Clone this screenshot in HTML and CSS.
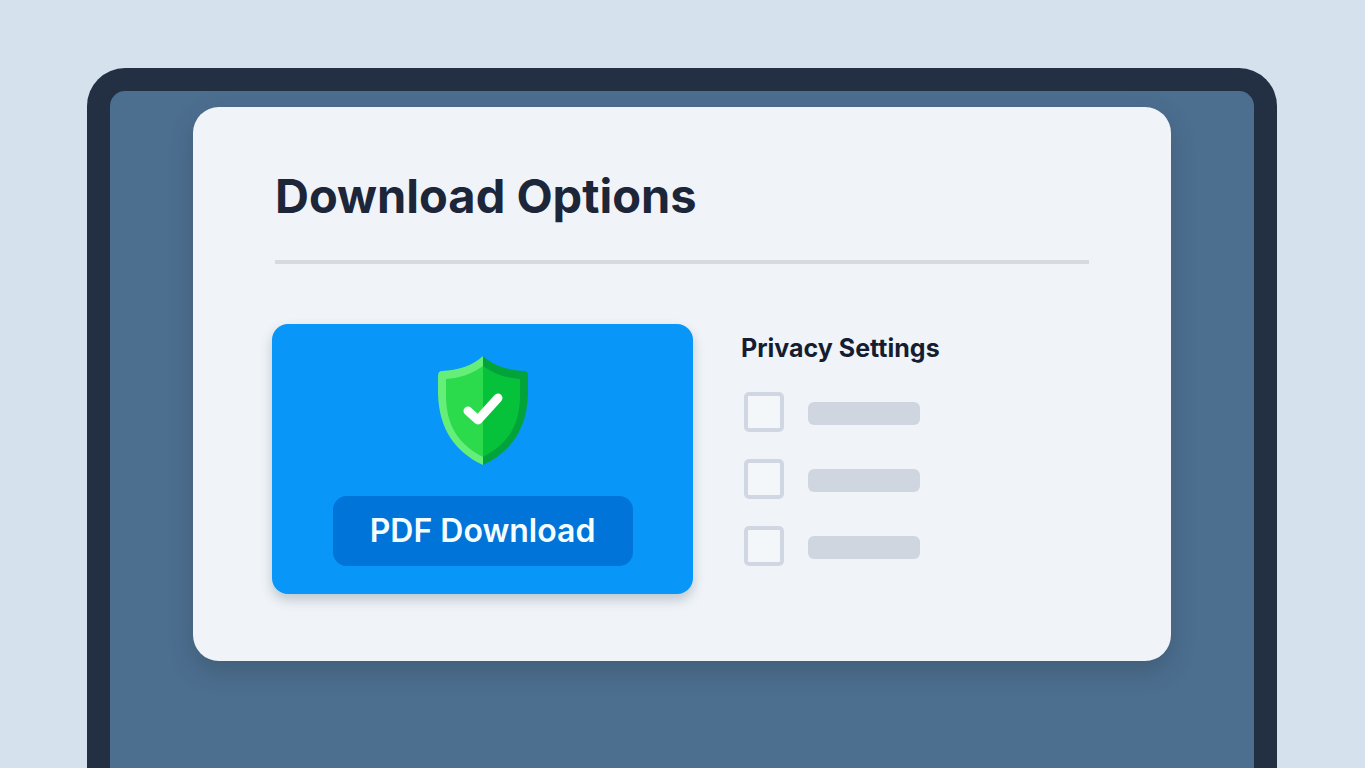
FILE: index.html
```html
<!DOCTYPE html>
<html lang="en">
<head>
<meta charset="utf-8">
<meta name="viewport" content="width=device-width, initial-scale=1">
<title>Download Options</title>
<link rel="stylesheet" href="styles.css">
</head>
<body>
<div class="device">
  <main class="card">
    <header class="card-header">
      <h1 class="title">Download Options</h1>
    </header>
    <div class="content">
      <section class="download">
        <svg class="shield" viewBox="0 0 90 110" aria-hidden="true">
          <path fill="#65ef78" d="M45 0C34 10 20 14 4 15Q0 15 0 20V38C1 73 17 96 45 109Z"/>
          <path fill="#03a33c" d="M45 0C56 10 70 14 86 15Q90 15 90 20V38C89 73 73 96 45 109Z"/>
          <path fill="#2bdb4c" d="M45 10C34 18 22 22 8 23V42C9 72 22 89 45 101Z"/>
          <path fill="#06c23b" d="M45 10C56 18 68 22 82 23V42C81 72 68 89 45 101Z"/>
          <path fill="none" stroke="#fff" stroke-width="9" stroke-linecap="round" stroke-linejoin="round" d="M30 55L40 64L60 42"/>
        </svg>
        <button class="download-button" type="button">PDF Download</button>
      </section>
      <section class="privacy">
        <h2 class="subtitle">Privacy Settings</h2>
        <div class="options">
          <label class="option"><input class="box" type="checkbox" aria-label="Privacy option 1"><span class="bar"></span></label>
          <label class="option"><input class="box" type="checkbox" aria-label="Privacy option 2"><span class="bar"></span></label>
          <label class="option"><input class="box" type="checkbox" aria-label="Privacy option 3"><span class="bar"></span></label>
        </div>
      </section>
    </div>
  </main>
</div>
</body>
</html>
```
FILE: styles.css
```css
* { box-sizing: border-box; }

body {
  margin: 0;
  min-height: 100vh;
  padding: 68px 88px 0 87px;
  display: flex;
  background: #d5e2ed;
  color: #1d2539;
  font-family: Inter, "Liberation Sans", sans-serif;
}

.device {
  flex: 1;
  padding: 16px 83px 107px;
  border: 23px solid #233043;
  border-bottom: 0;
  border-radius: 38px 38px 0 0;
  background: #4c6e8f;
}

.card {
  padding: 60px 79px 67px;
  border-radius: 26px;
  background: #f0f4f8;
  box-shadow: 0 10px 22px rgba(45, 65, 80, 0.35);
}

.card-header {
  margin: 0 3px 60px;
  padding-bottom: 35px;
  border-bottom: 4px solid #d6dbe1;
}

.title {
  margin: 0;
  font-size: 47px;
  line-height: 58px;
  font-weight: 700;
}

.content {
  display: grid;
  grid-template-columns: 421fr 351fr;
  column-gap: 48px;
}

.download {
  display: flex;
  flex-direction: column;
  align-items: center;
  padding: 32px 24px 28px;
  border-radius: 16px;
  background: #0896f9;
  box-shadow: 0 6px 12px rgba(40, 65, 90, 0.25);
}

.shield {
  width: 90px;
  height: 110px;
  margin-bottom: 30px;
}

.download-button {
  width: 100%;
  max-width: 300px;
  height: 70px;
  padding: 0;
  border: 0;
  border-radius: 14px;
  background: #0074d8;
  color: #f4feff;
  font: 600 32px/40px Inter, "Liberation Sans", sans-serif;
}

.subtitle {
  margin: 8px 0 28px;
  color: #171d30;
  font-size: 25px;
  line-height: 32px;
  font-weight: 650;
}

.options {
  display: grid;
  gap: 27px;
  padding-left: 3px;
}

.option {
  display: flex;
  align-items: center;
  gap: 24px;
}

.box {
  appearance: none;
  width: 40px;
  height: 40px;
  margin: 0;
  border: 4px solid #d1d7e2;
  border-radius: 5px;
  background: #f4f7fa;
}

.box:checked { background: #0896f9; }

.bar {
  width: 112px;
  height: 23px;
  margin-top: 2px;
  border-radius: 6px;
  background: #cfd6e0;
}
```
